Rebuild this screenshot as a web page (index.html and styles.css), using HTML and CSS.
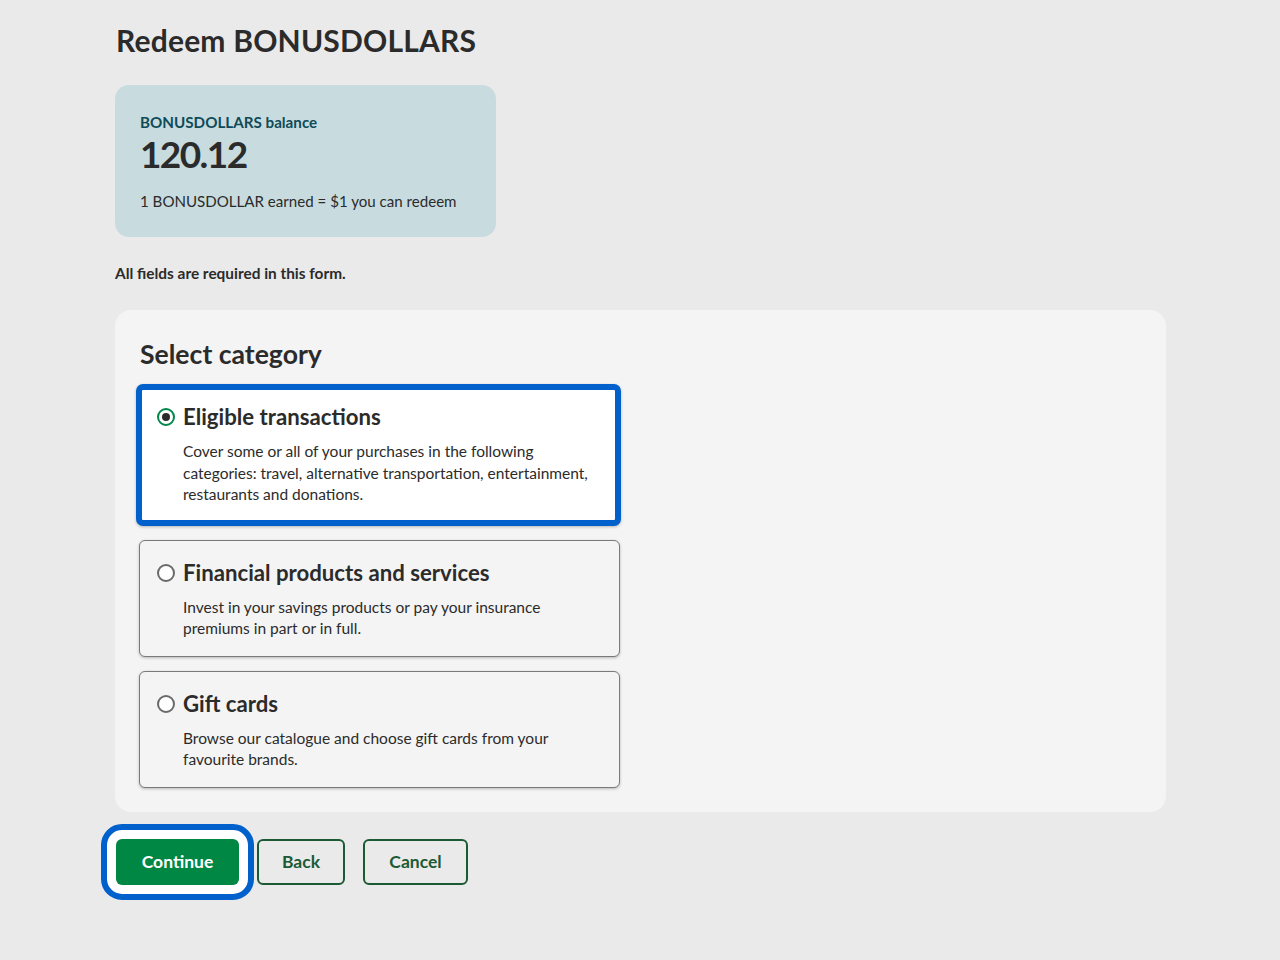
FILE: index.html
```html
<!DOCTYPE html>
<html lang="en">
<head>
<meta charset="utf-8">
<title>Redeem BONUSDOLLARS</title>
<link rel="stylesheet" href="styles.css">
</head>
<body>
<main class="page">
  <h1 class="title">Redeem BONUSDOLLARS</h1>

  <section class="balance">
    <div class="balance-label">BONUSDOLLARS balance</div>
    <div class="balance-value">120.12</div>
    <div class="balance-note">1 BONUSDOLLAR earned = $1 you can redeem</div>
  </section>

  <p class="required">All fields are required in this form.</p>

  <section class="panel">
    <h2 class="panel-title">Select category</h2>
    <div class="options">
      <label class="option option-selected">
        <span class="radio radio-on"><span class="dot"></span></span>
        <span class="option-body">
          <span class="option-title">Eligible transactions</span>
          <span class="option-desc">Cover some or all of your purchases in the following categories: travel, alternative transportation, entertainment, restaurants and donations.</span>
        </span>
      </label>
      <label class="option">
        <span class="radio"></span>
        <span class="option-body">
          <span class="option-title">Financial products and services</span>
          <span class="option-desc">Invest in your savings products or pay your insurance premiums in part or in full.</span>
        </span>
      </label>
      <label class="option">
        <span class="radio"></span>
        <span class="option-body">
          <span class="option-title">Gift cards</span>
          <span class="option-desc">Browse our catalogue and choose gift cards from your favourite brands.</span>
        </span>
      </label>
    </div>
  </section>

  <div class="actions">
    <button class="btn btn-primary">Continue</button>
    <button class="btn btn-secondary btn-back">Back</button>
    <button class="btn btn-secondary btn-cancel">Cancel</button>
  </div>
</main>
</body>
</html>
```

FILE: styles.css
```css
* { box-sizing: border-box; }
html, body { margin: 0; padding: 0; }
body {
  background: #eaeaea;
  font-family: Lato, "Open Sans", "Liberation Sans", sans-serif;
  color: #2b2b2b;
}
.page {
  width: 1051px;
  margin-left: 115px;
  padding-top: 21px;
  padding-bottom: 60px;
}
.title {
  margin: 0 0 0 1px;
  font-size: 30px;
  font-weight: 700;
  line-height: 38px;
  color: #2b2b2b;
  letter-spacing: 0.2px;
}
.balance {
  margin-top: 26px;
  width: 381px;
  height: 152px;
  background: #c8dcdf;
  border-radius: 14px;
  padding: 27px 25px 0 25px;
}
.balance-label {
  font-size: 15.2px;
  font-weight: 700;
  color: #0f4b59;
  line-height: 20px;
}
.balance-value {
  font-size: 37px;
  font-weight: 700;
  line-height: 44px;
  color: #2b2b2b;
  letter-spacing: -1.6px;
}
.balance-note {
  margin-top: 15px;
  font-size: 15.1px;
  line-height: 20px;
  color: #2b2b2b;
}
.required {
  margin: 26px 0 0 0;
  font-size: 15.4px;
  font-weight: 700;
  line-height: 20px;
  color: #2b2b2b;
}
.panel {
  margin-top: 27px;
  background: #f4f4f4;
  border-radius: 16px;
  padding: 26px 25px 24px 24px;
}
.panel-title {
  margin: 0 0 0 1px;
  font-size: 26.6px;
  font-weight: 700;
  line-height: 36px;
  color: #2b2b2b;
}
.options {
  margin-top: 12px;
  display: flex;
  flex-direction: column;
  gap: 14px;
  width: 481px;
}
.option {
  display: flex;
  gap: 8px;
  border: 1px solid #7a7a7a;
  border-radius: 6px;
  background: #f4f4f4;
  box-shadow: 0 1px 3px rgba(0,0,0,0.25);
  padding: 19px 20px 16px 17px;
  cursor: pointer;
}
.option-selected {
  margin-left: -3px;
  width: 485px;
  border: 6px solid #0060cc;
  background: #ffffff;
  padding: 14px 20px 14px 15px;
  border-radius: 7px;
}
.radio {
  flex: none;
  width: 18px;
  height: 18px;
  margin-top: 4px;
  border: 2px solid #6a6a6a;
  border-radius: 50%;
  display: flex;
  align-items: center;
  justify-content: center;
  background: #fff;
}
.radio-on {
  border-color: #00874a;
}
.dot {
  width: 8px;
  height: 8px;
  border-radius: 50%;
  background: #2b2b2b;
}
.option-body {
  display: flex;
  flex-direction: column;
}
.option-title {
  font-size: 22.2px;
  font-weight: 700;
  line-height: 26px;
  color: #2b2b2b;
}
.option-desc {
  margin-top: 11px;
  font-size: 15.5px;
  line-height: 21.5px;
  color: #2b2b2b;
}
.actions {
  margin-top: 27px;
  display: flex;
  gap: 18px;
  align-items: center;
}
.btn {
  font-family: inherit;
  font-size: 17.5px;
  font-weight: 700;
  height: 46px;
  border-radius: 6px;
  padding: 0;
  cursor: pointer;
}
.btn-primary {
  margin-left: 1px;
  background: #008744;
  color: #ffffff;
  border: none;
  width: 123px;
  outline: 6px solid #0060cc;
  outline-offset: 9px;
  box-shadow: 0 0 0 9px #ffffff;
}
.btn-secondary {
  background: transparent;
  color: #1c5a35;
  border: 2px solid #1c5a35;
}
.btn-back { width: 88px; }
.btn-cancel { width: 105px; }
```
